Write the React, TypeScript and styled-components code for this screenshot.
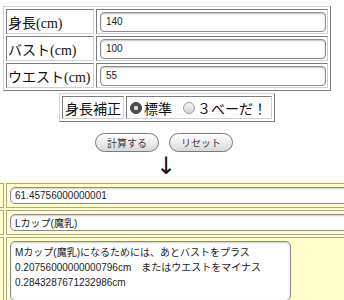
import React from "react";
import styled, { createGlobalStyle } from "styled-components";

const Global = createGlobalStyle`
  html, body { margin: 0; padding: 0; background: #fff; overflow: hidden; }
  body { font-family: "Liberation Serif", "Noto Sans CJK JP", serif; color: #111; }
`;

const Form = styled.div`
  width: 334px;
  display: flex;
  flex-direction: column;
  align-items: center;
`;

const BevelTable = styled.table`
  border-spacing: 2px;
  border: 1px solid;
  border-color: #d0d0d0 #7c7c7c #7c7c7c #d0d0d0;
`;

const InputTable = styled(BevelTable)`
  margin-top: 6px;
  width: 328px;
`;

const Cell = styled.td`
  border: 1px solid;
  border-color: #7c7c7c #d0d0d0 #d0d0d0 #7c7c7c;
  padding: 0;
  vertical-align: middle;
`;

const LabelCell = styled(Cell)`
  width: 84px;
  height: 23px;
  padding: 0 1px;
  font-size: 14px;
  white-space: nowrap;
`;

const FieldCell = styled(Cell)`
  padding: 0 1px 0 3px;
`;

const TextInput = styled.input`
  display: block;
  box-sizing: border-box;
  width: 100%;
  height: 20px;
  border: 1px solid #8a8a8a;
  border-radius: 4px;
  box-shadow: inset 0 1px 2px rgba(0, 0, 0, 0.25);
  padding: 0 5px;
  font: 10px "Liberation Sans", "Noto Sans CJK JP", sans-serif;
  color: #222;
  background: #fff;
  outline: none;
`;

const OptionTable = styled(BevelTable)`
  margin-top: 2px;
`;

const OptionCell = styled(Cell)`
  height: 21px;
  padding: 0 2px;
  font-size: 14px;
  white-space: nowrap;
`;

const RadioLabel = styled.label<{ $gap: number }>`
  display: inline-flex;
  align-items: center;
  margin-right: ${(p) => p.$gap}px;
`;

const Radio = styled.span<{ $checked?: boolean }>`
  display: inline-block;
  box-sizing: border-box;
  width: 12px;
  height: 12px;
  border-radius: 50%;
  margin: 0 2px 0 1px;
  border: 1px solid ${(p) => (p.$checked ? "#333" : "#9a9a9a")};
  background: ${(p) =>
    p.$checked
      ? "radial-gradient(circle at 50% 50%, #d8d8d8 0 2px, #444 2.6px, #666 100%)"
      : "linear-gradient(#f4f4f4, #d4d4d4)"};
`;

const ButtonRow = styled.div`
  display: flex;
  gap: 10px;
  margin-top: 11px;
  padding-right: 6px;
`;

const PillButton = styled.button`
  height: 19px;
  padding: 0 11px;
  border: 1px solid #7a7a7a;
  border-radius: 10px;
  background: linear-gradient(#ffffff, #e8e8e8 60%, #d8d8d8);
  font: 10px "Noto Sans CJK JP", sans-serif;
  color: #3a3a3a;
  line-height: 17px;
`;

const Arrow = styled.div`
  width: 334px;
  height: 29px;
  font: 24px/29px "DejaVu Sans", sans-serif;
  color: #111;
  text-align: center;
  padding-right: 2px;
  box-sizing: border-box;
`;

const ResultSection = styled.div`
  background: #ffffcc;
  height: 130px;
  overflow: hidden;
`;

const ResultTable = styled.table`
  width: max-content;
  margin-left: -10px;
  border-spacing: 2px;
`;

const YCell = styled.td`
  border: 1px solid #a9a78e;
  padding: 0;
`;

const Stub = styled.div`
  width: 10px;
`;

const ResultCell = styled(YCell)`
  padding: 3px 2px 3px 3px;
`;

const ResultInput = styled.input`
  display: block;
  box-sizing: border-box;
  width: 420px;
  height: 17px;
  border: 1px solid #8a8a8a;
  border-radius: 5px;
  box-shadow: inset 0 1px 2px rgba(0, 0, 0, 0.2);
  padding: 0 4px;
  font: 10px "Liberation Sans", "Noto Sans CJK JP", sans-serif;
  color: #222;
  background: #fff;
  outline: none;
`;

const ResultText = styled.div`
  box-sizing: border-box;
  width: 281px;
  height: 60px;
  border: 1px solid #8a8a8a;
  border-radius: 5px;
  box-shadow: inset 0 1px 2px rgba(0, 0, 0, 0.2);
  padding: 3px 4px;
  font: 10px/15px "Liberation Sans", "Noto Sans CJK JP", sans-serif;
  color: #222;
  background: #fff;
  white-space: pre;
`;

const fields = [
  { label: "身長(cm)", value: "140" },
  { label: "バスト(cm)", value: "100" },
  { label: "ウエスト(cm)", value: "55" },
];

const results = ["61.45756000000001", "Lカップ(魔乳)"];

export default function App() {
  return (
    <>
      <Global />
      <Form>
        <InputTable>
          <tbody>
            {fields.map((f) => (
              <tr key={f.label}>
                <LabelCell>{f.label}</LabelCell>
                <FieldCell>
                  <TextInput defaultValue={f.value} />
                </FieldCell>
              </tr>
            ))}
          </tbody>
        </InputTable>
        <OptionTable>
          <tbody>
            <tr>
              <OptionCell>身長補正</OptionCell>
              <OptionCell>
                <RadioLabel $gap={10}>
                  <Radio $checked />
                  標準
                </RadioLabel>
                <RadioLabel $gap={2}>
                  <Radio />
                  ３べーだ！
                </RadioLabel>
              </OptionCell>
            </tr>
          </tbody>
        </OptionTable>
        <ButtonRow>
          <PillButton>計算する</PillButton>
          <PillButton>リセット</PillButton>
        </ButtonRow>
      </Form>
      <Arrow>↓</Arrow>
      <ResultSection>
        <ResultTable>
          <tbody>
            {results.map((r) => (
              <tr key={r}>
                <YCell>
                  <Stub />
                </YCell>
                <ResultCell>
                  <ResultInput defaultValue={r} />
                </ResultCell>
              </tr>
            ))}
            <tr>
              <YCell>
                <Stub />
              </YCell>
              <ResultCell>
                <ResultText>
                  {"Mカップ(魔乳)になるためには、あとバストをプラス\n0.20756000000000796cm　またはウエストをマイナス\n0.2843287671232986cm"}
                </ResultText>
              </ResultCell>
            </tr>
          </tbody>
        </ResultTable>
      </ResultSection>
    </>
  );
}
